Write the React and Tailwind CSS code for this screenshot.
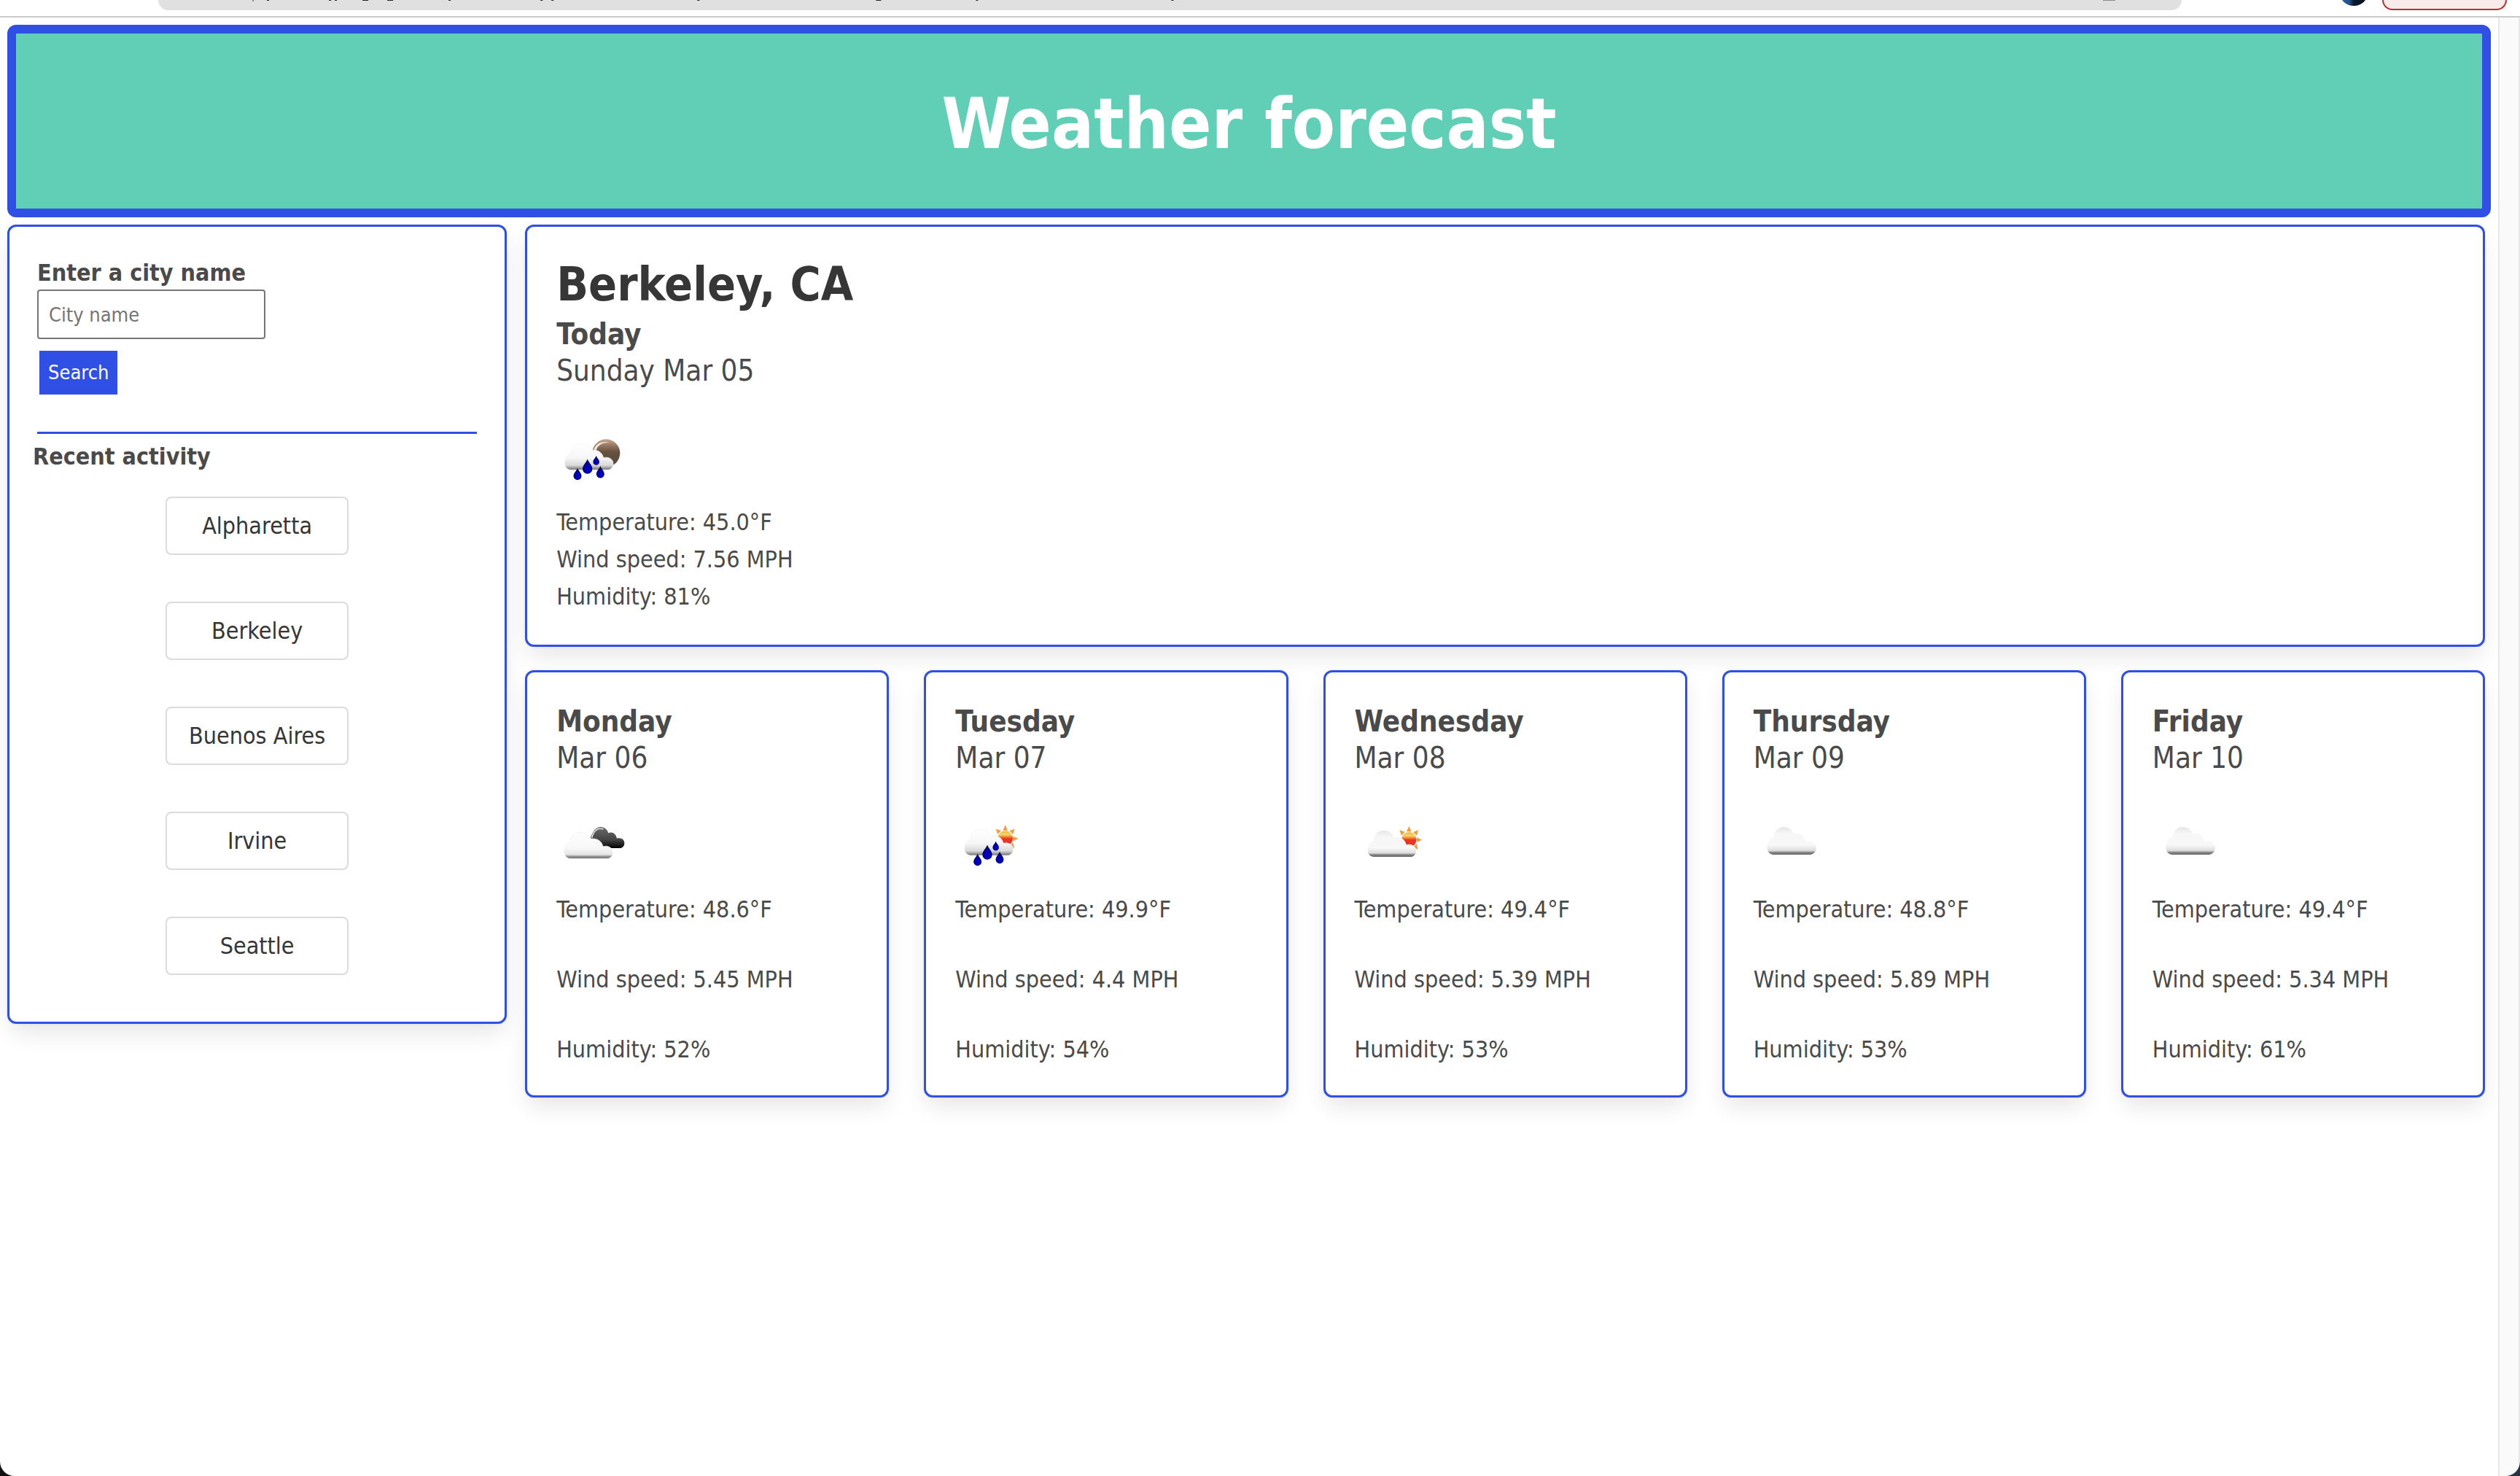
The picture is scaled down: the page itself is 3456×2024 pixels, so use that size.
const CLOUD =
  "M130 220C112 220 102 205 104 188C105 170 115 158 128 154C130 126 148 112 170 112C191 112 205 122 213 140C238 134 258 148 263 170C285 164 303 176 303 195C303 210 293 220 280 220Z";
const DROP = "M0 -31C3 -17 20 -6 20 10A20 20 0 0 1 -20 10C-20 -6 -3 -17 0 -31Z";

function Defs({ id }) {
  return (
    <defs>
      <linearGradient id={`${id}-cloud`} x1="0" y1="0" x2="0" y2="1">
        <stop offset="0" stopColor="#fdfdfd" />
        <stop offset="0.6" stopColor="#f8f8f8" />
        <stop offset="0.85" stopColor="#e4e4e4" />
        <stop offset="0.93" stopColor="#8a8a8a" />
        <stop offset="1" stopColor="#6a6a6a" />
      </linearGradient>
      <linearGradient id={`${id}-grey`} x1="0" y1="0" x2="0" y2="1">
        <stop offset="0" stopColor="#e6e6e6" />
        <stop offset="0.25" stopColor="#f7f7f7" />
        <stop offset="0.65" stopColor="#f8f8f8" />
        <stop offset="0.85" stopColor="#dedede" />
        <stop offset="0.93" stopColor="#7c7c7c" />
        <stop offset="1" stopColor="#6a6a6a" />
      </linearGradient>
      <linearGradient id={`${id}-rain`} x1="0" y1="0" x2="0" y2="1">
        <stop offset="0" stopColor="#ffffff" />
        <stop offset="0.55" stopColor="#f6f6f6" />
        <stop offset="0.83" stopColor="#d8d8d8" />
        <stop offset="1" stopColor="#6f6f6f" />
      </linearGradient>
      <linearGradient id={`${id}-dark`} x1="0" y1="0" x2="0" y2="1">
        <stop offset="0" stopColor="#6a6a6a" />
        <stop offset="0.6" stopColor="#454545" />
        <stop offset="1" stopColor="#000000" />
      </linearGradient>
      <linearGradient id={`${id}-moon`} x1="0" y1="0" x2="0" y2="1">
        <stop offset="0" stopColor="#c9a78f" />
        <stop offset="0.25" stopColor="#8f735f" />
        <stop offset="0.45" stopColor="#66513f" />
        <stop offset="1" stopColor="#57473a" />
      </linearGradient>
      <linearGradient id={`${id}-sun`} x1="0" y1="0" x2="0" y2="1">
        <stop offset="0" stopColor="#f3b63f" />
        <stop offset="0.25" stopColor="#f6d667" />
        <stop offset="0.42" stopColor="#f0742c" />
        <stop offset="0.52" stopColor="#ea3423" />
        <stop offset="1" stopColor="#ea3423" />
      </linearGradient>
      <radialGradient id={`${id}-drop`} cx="0.5" cy="0.68" r="0.6">
        <stop offset="0" stopColor="#0000d8" />
        <stop offset="0.5" stopColor="#0000a8" />
        <stop offset="1" stopColor="#00003c" />
      </radialGradient>
      <filter id={`${id}-soft`} x="-10%" y="-10%" width="120%" height="120%">
        <feGaussianBlur stdDeviation="1.4" />
      </filter>
    </defs>
  );
}

function Drops({ id, points }) {
  return points.map(([x, y, s]) => (
    <path key={`${x}-${y}`} d={DROP} transform={`translate(${x} ${y}) scale(${s})`} fill={`url(#${id}-drop)`} />
  ));
}

function Sun({ id }) {
  return (
    <g>
      <g fill="#ee9f3c">
        <path d="M266 94L276 116H256Z" />
        <path d="M304 110L298 132L283 118Z" />
        <path d="M227 110L249 117L235 132Z" />
        <path d="M319 150L298 160V140Z" />
        <path d="M303 190L283 180L298 166Z" />
      </g>
      <circle cx="266" cy="149" r="31" fill={`url(#${id}-sun)`} />
    </g>
  );
}

function Icon({ id, left, label, children }) {
  return (
    <svg viewBox={`${left} 30 300 300`} className="block size-[100px]" role="img" aria-label={label}>
      <Defs id={id} />
      <g filter={`url(#${id}-soft)`}>{children}</g>
    </svg>
  );
}

function NightRain() {
  return (
    <Icon id="night" left={69} label="Rain">
      <circle cx="274" cy="151" r="57" fill="url(#night-moon)" />
      <path d="M221 142C228 112 254 99 288 107C256 106 238 120 232 142Z" fill="#efe3da" />
      <path d={CLOUD} fill="url(#night-rain)" stroke="#f0f0f0" strokeWidth="2" />
      <Drops id="night" points={[[197, 206, 1], [156, 237, 0.82], [250, 229, 0.82], [233, 181, 0.64]]} />
    </Icon>
  );
}

function BrokenClouds() {
  return (
    <Icon id="broken" left={69} label="Broken clouds">
      <path d="M208 148C216 138 220 104 251 102C268 102 279 113 283 127C299 119 314 130 318 149C336 145 349 154 349 168C349 181 341 189 329 189H255L228 152Z" fill="url(#broken-dark)" />
      <path d="M215 147C222 118 238 103 262 111" fill="none" stroke="#e0e0e0" strokeWidth="5" />
      <path d={CLOUD} transform="translate(-2 12)" fill="url(#broken-cloud)" stroke="#f0f0f0" strokeWidth="2" />
    </Icon>
  );
}

function DayRain() {
  return (
    <Icon id="day" left={60} label="Rain">
      <Sun id="day" />
      <path d={CLOUD} transform="translate(-5 -1)" fill="url(#day-rain)" stroke="#f0f0f0" strokeWidth="2" />
      <Drops id="day" points={[[192, 206, 1], [152, 237, 0.82], [243, 228, 0.82], [227, 180, 0.64]]} />
    </Icon>
  );
}

function FewClouds() {
  return (
    <Icon id="few" left={51} label="Few clouds">
      <g transform="translate(8 5)">
        <Sun id="few" />
      </g>
      <path d={CLOUD} transform="translate(0 5)" fill="url(#few-grey)" />
    </Icon>
  );
}

function Cloudy({ id }) {
  return (
    <Icon id={id} left={42} label="Cloudy">
      <path
        d="M124 216C106 214 96 201 97 182C98 162 108 150 124 146C127 119 144 102 167 102C187 102 199 114 208 131C230 122 248 134 256 163C281 157 300 168 300 187C300 202 290 214 276 216Z"
        fill={`url(#${id}-grey)`}
      />
    </Icon>
  );
}

const cities = ["Alpharetta", "Berkeley", "Buenos Aires", "Irvine", "Seattle"];

const days = [
  { day: "Monday", date: "Mar 06", icon: <BrokenClouds />, temp: "48.6", wind: "5.45", humidity: "52" },
  { day: "Tuesday", date: "Mar 07", icon: <DayRain />, temp: "49.9", wind: "4.4", humidity: "54" },
  { day: "Wednesday", date: "Mar 08", icon: <FewClouds />, temp: "49.4", wind: "5.39", humidity: "53" },
  { day: "Thursday", date: "Mar 09", icon: <Cloudy id="thu" />, temp: "48.8", wind: "5.89", humidity: "53" },
  { day: "Friday", date: "Mar 10", icon: <Cloudy id="fri" />, temp: "49.4", wind: "5.34", humidity: "61" },
];

const card =
  "rounded-xl border-3 border-[#304fe5] bg-white shadow-[0_16px_32px_-4px_rgba(10,10,10,0.1),0_0_0_2px_rgba(10,10,10,0.02)]";

function Toolbar() {
  return (
    <div className="flex h-6 items-start border-b-2 border-[#cbcbcb] bg-white">
      <div className="ml-[217px] h-3.5 flex-1 overflow-hidden rounded-b-3xl bg-[#e0e0e0]">
        <svg viewBox="217 0 2774 14" className="block h-3.5 w-full" preserveAspectRatio="xMinYMin slice" aria-hidden="true">
          <path d="M347 0V2M2883 0H2900" stroke="#8a8a8a" strokeWidth="2" />
          <path
            d="M366 0h3M451 0h3M459 0h3M497 0h8M531 0h8M615 0h3M741 0h3M756 0h3M956 0h3M1201 0h7M1338 0h3M1606 0h3"
            stroke="#222222"
            strokeWidth="2"
          />
        </svg>
      </div>
      <svg viewBox="0 0 36 8" className="ml-[218px] h-2 w-9" aria-hidden="true">
        <defs>
          <linearGradient id="avatar">
            <stop offset="0" stopColor="#2b66a8" />
            <stop offset="0.35" stopColor="#234f86" />
            <stop offset="0.5" stopColor="#0a1a2c" />
            <stop offset="1" stopColor="#050c14" />
          </linearGradient>
        </defs>
        <circle cx="18" cy="-12" r="20" fill="url(#avatar)" />
      </svg>
      <div className="mr-[18px] ml-[21px] h-3.5 w-[171px] rounded-b-3xl border-2 border-t-0 border-[#b5332b] bg-[#f8ecea]" />
    </div>
  );
}

function SearchPanel() {
  return (
    <aside className={`ml-2.5 w-1/5 shrink-0 self-start pt-10 pb-16 ${card}`}>
      <form className="px-[38px]" onSubmit={(e) => e.preventDefault()}>
        <label htmlFor="city" className="block leading-[46px] font-bold">
          Enter a city name
        </label>
        <input
          id="city"
          type="text"
          placeholder="City name"
          className="block h-[68px] w-[313px] rounded border-2 border-[#767676] bg-white px-3.5 text-[27px] placeholder:text-[#757575]"
        />
        <button type="submit" className="mt-4 ml-[3px] block h-[60px] bg-[#304fe5] px-3 text-[27px] text-white">
          Search
        </button>
      </form>
      <hr className="mx-[38px] mt-[51px] border-t-3 border-[#304fe5]" />
      <h2 className="mt-[7px] px-8 leading-[48px] font-bold">Recent activity</h2>
      <div className="mt-[31px] flex flex-col items-center gap-16">
        {cities.map((city) => (
          <button
            key={city}
            type="button"
            className="h-20 w-[251px] rounded-lg border-2 border-[#dbdbdb] bg-white text-[#363636]"
          >
            {city}
          </button>
        ))}
      </div>
    </aside>
  );
}

export default function App() {
  return (
    <div className="relative flex min-h-screen flex-col overflow-hidden bg-white font-['DejaVu_Sans_Condensed','DejaVu_Sans',sans-serif] text-[32px] text-[#4a4a4a]">
      <Toolbar />
      <div className="flex flex-1">
        <div className="min-w-0 flex-1">
          <header className="m-2.5 rounded-xl border-12 border-[#304fe5] bg-[#61cfb5] pt-16 pb-14 text-center">
            <h1 className="text-[96px] leading-[120px] font-bold text-white">Weather forecast</h1>
          </header>
          <div className="flex">
            <SearchPanel />
            <main className="mr-[18px] ml-[25px] flex min-w-0 flex-1 flex-col gap-8">
              <section className={`p-10 ${card}`}>
                <h2 className="mb-1 text-[64px] leading-[78px] font-bold text-[#363636]">Berkeley, CA</h2>
                <h3 className="text-[40px] leading-[50px] font-bold">Today</h3>
                <p className="mb-12 text-[40px] leading-[50px]">Sunday Mar 05</p>
                <NightRain />
                <div className="mt-2.5 leading-[51px]">
                  <p>Temperature: 45.0°F</p>
                  <p>Wind speed: 7.56 MPH</p>
                  <p>Humidity: 81%</p>
                </div>
              </section>
              <div className="grid grid-cols-5 gap-12">
                {days.map((d) => (
                  <section key={d.day} className={`px-10 pt-[42px] pb-[39px] ${card}`}>
                    <h3 className="text-[40px] leading-[50px] font-bold">{d.day}</h3>
                    <p className="mb-[46px] text-[40px] leading-[50px]">{d.date}</p>
                    {d.icon}
                    <div className="mt-[13px] flex flex-col gap-12 leading-[48px]">
                      <p>Temperature: {d.temp}°F</p>
                      <p>Wind speed: {d.wind} MPH</p>
                      <p>Humidity: {d.humidity}%</p>
                    </div>
                  </section>
                ))}
              </div>
            </main>
          </div>
        </div>
        <div className="w-[30px] border-x-2 border-[#e8e8e8] bg-[#fafafa]" />
      </div>
      <svg viewBox="0 0 20 20" className="absolute bottom-0 left-0 size-5" aria-hidden="true">
        <path d="M0 0A20 20 0 0 0 20 20H0Z" fill="#111111" />
      </svg>
      <svg viewBox="0 0 20 20" className="absolute right-0 bottom-0 size-5" aria-hidden="true">
        <path d="M20 0A20 20 0 0 1 0 20H20Z" fill="#2a3440" />
      </svg>
    </div>
  );
}
